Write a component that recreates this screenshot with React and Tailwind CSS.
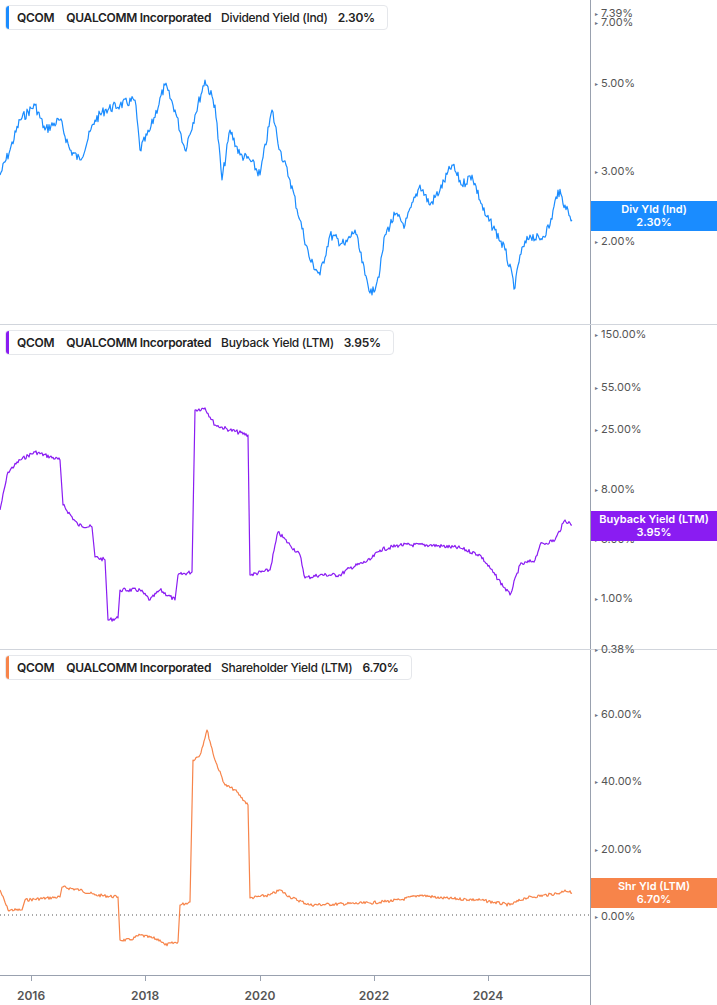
const F = { fontFamily: 'Inter, "Liberation Sans", sans-serif' };

const P1 = "0,175 10,150 20,120 35,105 45,130 60,120 70,150 80,160 95,120 105,110 120,105 135,100 140,150 150,130 165,85 175,110 185,150 195,115 205,80 215,105 222,180 230,130 240,155 250,160 260,175 272,110 280,150 290,180 300,220 310,260 320,275 330,235 345,245 355,230 365,275 372,295 380,270 385,235 395,215 405,225 420,185 430,205 440,190 452,165 462,185 472,175 485,215 495,230 505,250 515,288 520,255 530,235 540,240 550,225 558,190 565,205 572,220";
const P2 = "0,185 8,147 20,135 35,127 60,135 63,180 78,200 92,202 95,232 105,235 108,295 118,293 120,265 140,265 150,275 160,265 175,275 178,250 192,247 195,85 205,83 215,100 230,105 248,110 250,250 270,245 278,207 290,220 300,230 305,253 320,250 340,250 350,243 370,235 380,225 400,220 430,220 460,223 480,230 495,250 510,270 520,240 535,235 540,220 555,215 565,195 572,200";
const P3 = "0,240 8,260 22,260 25,250 60,247 62,237 80,240 95,245 118,247 120,290 130,290 140,285 160,290 165,295 178,292 180,255 190,252 193,110 200,105 207,80 215,110 225,135 235,140 248,155 250,248 270,245 280,240 290,247 310,255 370,253 400,250 420,245 440,248 480,250 510,255 525,248 560,243 565,240 572,243";

function jitter(str, amp) {
  const pts = str.split(" ").map((p) => p.split(",").map(Number));
  const out = [];
  let seed = 7;
  const rnd = () => { seed = (seed * 9301 + 49297) % 233280; return seed / 233280 - 0.5; };
  for (let i = 0; i < pts.length - 1; i++) {
    const [x1, y1] = pts[i], [x2, y2] = pts[i + 1];
    out.push([x1, y1]);
    const dx = x2 - x1;
    if (dx > 3) {
      for (let x = x1 + 1; x < x2; x += 1) {
        const t = (x - x1) / dx;
        out.push([x, y1 + (y2 - y1) * t + rnd() * amp]);
      }
    }
  }
  out.push(pts[pts.length - 1]);
  return out.map(([x, y]) => `${x},${y.toFixed(1)}`).join(" ");
}

function Legend({ color, label, value }) {
  return (
    <div className="absolute left-[5px] top-[5px] flex items-center bg-white border border-gray-200 rounded-sm h-[25px] pr-3 text-[12px] font-semibold text-[#222] tracking-[-0.3px]">
      <div className="w-[3px] h-full rounded-l-sm mr-2" style={{ background: color }} />
      <span>QCOM</span>
      <span className="ml-[12px]">QUALCOMM Incorporated</span>
      <span className="ml-[10px] font-medium">{label}</span>
      <span className="ml-[10px]">{value}</span>
    </div>
  );
}

function Panel({ color, pts, label, value, ticks, badge, zero, amp, border = true }) {
  return (
    <div className={`flex h-[325px] ${border ? 'border-b border-gray-300' : ''}`}>
      <div className="relative w-[591px] border-r border-gray-400">
        <svg className="absolute inset-0" width="591" height="325">
          {zero && <line x1="0" x2="591" y1={zero} y2={zero} stroke="#555" strokeDasharray="1 3" strokeWidth="1" />}
          <polyline points={jitter(pts, amp)} fill="none" stroke={color} strokeWidth="1.2" strokeLinejoin="round" />
        </svg>
        <Legend color={color} label={label} value={value} />
      </div>
      <div className="relative flex-1 text-[11px] text-[#555]">
        {ticks.map(([t, y]) => (
          <div key={t} className="absolute left-[4px] flex items-center" style={{ top: y - 7 }}>
            <span className="text-[6px] mr-[3px] text-gray-500">▸</span>{t}
          </div>
        ))}
        <div className="absolute left-0 right-0 flex flex-col items-center justify-center text-white text-[11px] font-semibold leading-[13px] h-[30px]" style={{ top: badge[0], background: color }}>
          <span>{badge[1]}</span><span>{value}</span>
        </div>
      </div>
    </div>
  );
}

export default function App() {
  return (
    <div className="w-[717px] h-[1005px] bg-white overflow-hidden" style={F}>
      <Panel color="#1a8cff" pts={P1} amp={10} label="Dividend Yield (Ind)" value="2.30%"
        ticks={[["7.39%", 12], ["7.00%", 21], ["5.00%", 82], ["3.00%", 170], ["2.00%", 240]]} badge={[201, "Div Yld (Ind)"]} />
      <Panel color="#8a1cf2" pts={P2} amp={4} label="Buyback Yield (LTM)" value="3.95%"
        ticks={[["150.00%", 8], ["55.00%", 61], ["25.00%", 103], ["8.00%", 163], ["3.00%", 213], ["1.00%", 272], ["0.38%", 323]]} badge={[186, "Buyback Yield (LTM)"]} />
      <Panel color="#f7844a" pts={P3} amp={3} label="Shareholder Yield (LTM)" value="6.70%" zero={265} border={false}
        ticks={[["60.00%", 63], ["40.00%", 130], ["20.00%", 198], ["0.00%", 265]]} badge={[228, "Shr Yld (LTM)"]} />
      <div className="flex h-[30px]">
        <div className="relative w-[591px] border-t border-r border-gray-400 text-[12px] font-semibold text-[#555]">
          {[["2016", 31], ["2018", 145], ["2020", 260], ["2022", 374], ["2024", 488]].map(([t, x]) => (
            <div key={t} className="absolute top-0 flex flex-col items-center w-[40px]" style={{ left: x - 20 }}>
              <div className="w-px h-[5px] bg-gray-400" />
              <span className="mt-[6px]">{t}</span>
            </div>
          ))}
        </div>
      </div>
    </div>
  );
}
